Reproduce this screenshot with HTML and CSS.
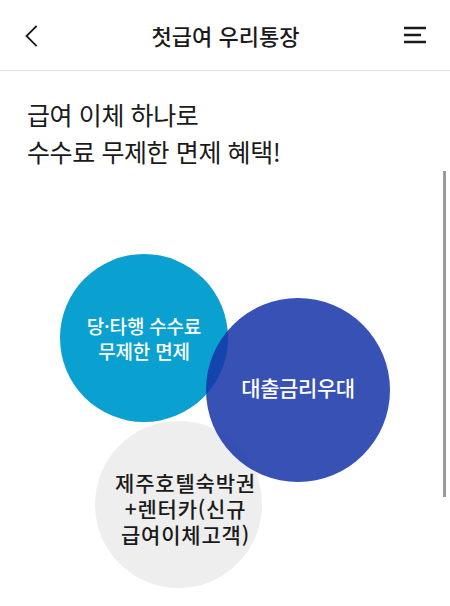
FILE: index.html
```html
<!DOCTYPE html>
<html lang="ko">
<head>
<meta charset="utf-8">
<title>첫급여 우리통장</title>
<link rel="stylesheet" href="styles.css">
</head>
<body>
<div class="page">
  <header class="topbar">
    <button class="icon-btn back" aria-label="뒤로">
      <svg width="14" height="22" viewBox="0 0 14 22"><path d="M12 1.5 L2.5 11 L12 20.5" fill="none" stroke="#1a1a1a" stroke-width="1.8" stroke-linecap="square"/></svg>
    </button>
    <h1 class="title">첫급여 우리통장</h1>
    <button class="icon-btn menu" aria-label="메뉴">
      <svg width="24" height="18" viewBox="0 0 24 18"><path d="M1 2 H23 M1 9 H18 M1 16 H23" fill="none" stroke="#1a1a1a" stroke-width="2.4"/></svg>
    </button>
  </header>
  <main class="content">
    <p class="headline">급여 이체 하나로<br>수수료 무제한 면제 혜택!</p>
    <div class="diagram">
      <div class="circle c-fee"><span>당·타행 수수료<br>무제한 면제</span></div>
      <div class="circle c-hotel"><span>제주호텔숙박권<br>+렌터카(신규<br>급여이체고객)</span></div>
      <div class="circle c-loan"><span>대출금리우대</span></div>
    </div>
    <div class="scrollbar"></div>
  </main>
</div>
</body>
</html>
```
FILE: styles.css
```css
* { box-sizing: border-box; }
html, body { margin: 0; padding: 0; background: #fff; }
body {
  font-family: "Noto Sans CJK KR", "Noto Sans", sans-serif;
  color: #1a1a1a;
}
.page { width: 450px; height: 606px; overflow: hidden; position: relative; }

.topbar {
  height: 71px;
  border-bottom: 1px solid #e4e4e4;
  display: flex;
  align-items: center;
  justify-content: space-between;
  padding: 0 23px 0 24px;
}
.icon-btn {
  border: 0; background: none; padding: 0; margin: 0;
  display: flex; align-items: center; justify-content: center;
  width: 26px; height: 26px;
}
.back { justify-content: flex-start; padding-top: 1px; }
.menu { justify-content: flex-end; }
.title {
  margin: 0;
  font-size: 22px;
  font-weight: 500;
  letter-spacing: 0;
  color: #1a1a1a;
}

.content { position: relative; }
.headline {
  margin: 0;
  padding: 25px 0 0 27px;
  font-size: 25px;
  line-height: 37px;
  font-weight: 400;
  letter-spacing: -0.4px;
  color: #1a1a1a;
}
.diagram { position: relative; height: 430px; }
.circle {
  position: absolute;
  border-radius: 50%;
  display: flex;
  align-items: center;
  justify-content: center;
  text-align: center;
}
.c-fee {
  left: 60px; top: 84px; width: 168px; height: 168px;
  background: #0aa0cf;
  color: #fff;
  font-size: 19px; line-height: 25px; font-weight: 500; letter-spacing: -0.2px;
}
.c-loan {
  left: 206px; top: 128px; width: 184px; height: 184px;
  background: rgba(22, 52, 168, 0.86);
  color: #fff;
  font-size: 21px; font-weight: 500; letter-spacing: -0.4px;
  padding-bottom: 6px;
}
.c-hotel {
  left: 95px; top: 251px; width: 167px; height: 167px;
  background: #eeeeee;
  color: #1a1a1a;
  font-size: 21px; line-height: 26px; font-weight: 500; letter-spacing: 0.8px;
  padding: 6px 0 0 14px;
}
.scrollbar {
  position: absolute;
  right: 4px; top: 100px;
  width: 3px; height: 326px;
  background: #9a9a9a;
}
```
